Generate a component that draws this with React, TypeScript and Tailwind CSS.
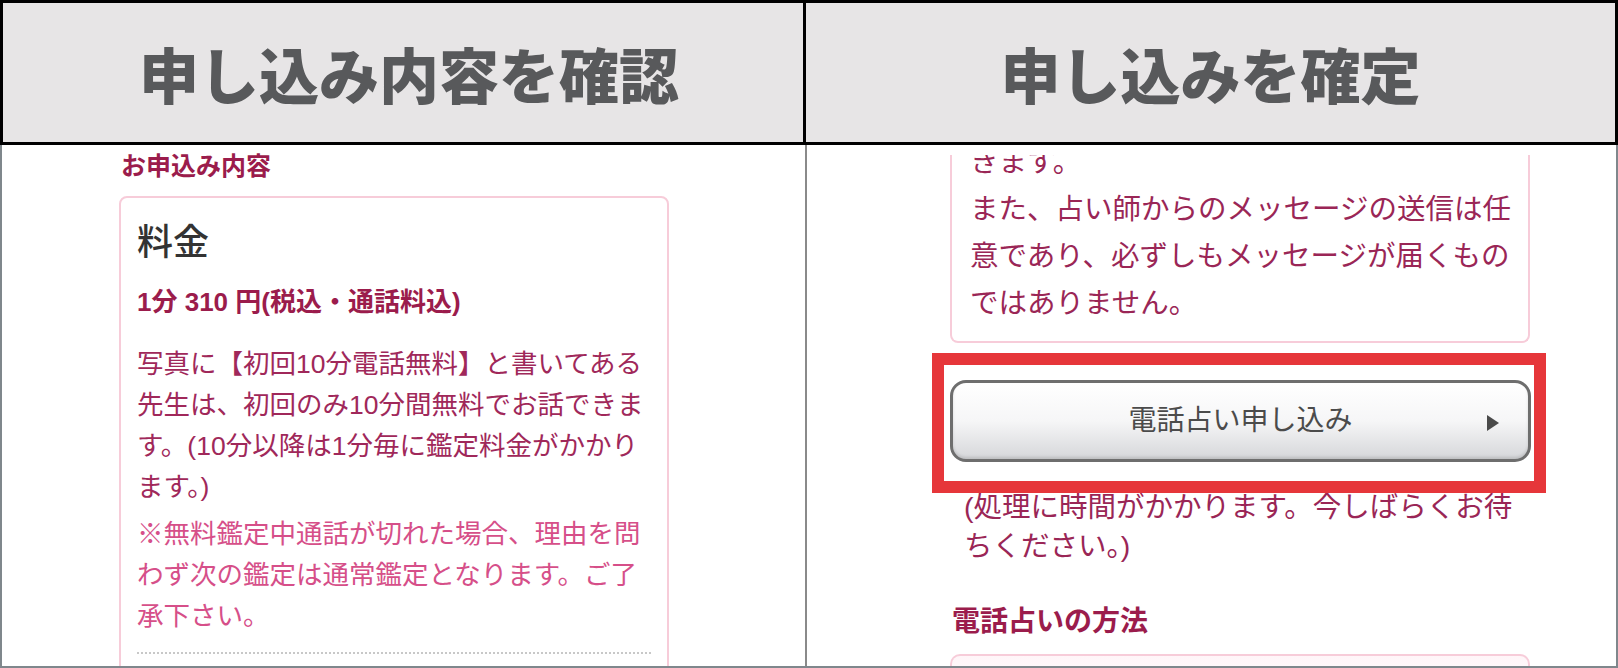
const jp = { fontFamily: '"Liberation Sans", "Noto Sans CJK JP", sans-serif' };
const jpHead = { fontFamily: '"Noto Sans CJK JP", sans-serif' };

function HeaderCell({ label, className }: { label: string; className?: string }) {
  return (
    <div className={`flex items-center justify-center bg-[#e7e5e6] ${className ?? ''}`}>
      <span className="text-[60px] font-black leading-none text-[#58595b]" style={jpHead}>
        {label}
      </span>
    </div>
  );
}

function LeftColumn() {
  return (
    <div className="w-[805px] h-full overflow-hidden pl-[117px] pt-[6px] border-r-2 border-[#8a8a8a]" style={jp}>
      <h2 className="pl-[2px] text-[25px] font-bold leading-[30px] text-[#9b1c4c]">お申込み内容</h2>
      <div className="mt-[15px] w-[550px] rounded-[8px] border-2 border-[#f7ccd9] px-[16px] pt-[21px]">
        <h3 className="text-[36px] font-medium leading-[48px] text-[#333333]">料金</h3>
        <p className="mt-[17px] text-[26px] font-bold leading-[36px] text-[#9b1c4c]">1分 310 円(税込・通話料込)</p>
        <p className="mt-[24px] whitespace-nowrap text-[26.5px] leading-[41px] text-[#a0285a]">
          写真に【初回10分電話無料】と書いてある<br />
          先生は、初回のみ10分間無料でお話できま<br />
          す。(10分以降は1分毎に鑑定料金がかかり<br />
          ます。)
        </p>
        <p className="mt-[6px] whitespace-nowrap text-[26.5px] leading-[41px] text-[#d64f89]">
          ※無料鑑定中通話が切れた場合、理由を問<br />
          わず次の鑑定は通常鑑定となります。ご了<br />
          承下さい。
        </p>
        <div className="mt-[15px] border-t-2 border-dotted border-[#c8c8c8]" />
        <div className="h-[40px]" />
      </div>
    </div>
  );
}

function CallButton() {
  return (
    <div className="relative mt-[37px]">
      <button
        type="button"
        className="relative flex h-[82px] w-[581px] items-center justify-center rounded-[16px] border-[3px] border-[#6e6e6e] bg-gradient-to-b from-white via-[#f6f6f7] to-[#d6d7da] shadow-[inset_0_-2px_3px_rgba(0,0,0,0.12)]"
      >
        <span className="text-[28px] leading-none text-[#4b4b4b]" style={jp}>電話占い申し込み</span>
        <svg className="absolute right-[29px] top-[32px]" width="12" height="16" viewBox="0 0 12 16">
          <path d="M0 0 L12 8 L0 16 Z" fill="#4a4a4a" />
        </svg>
      </button>
      <div className="pointer-events-none absolute left-[-18px] top-[-27px] z-10 h-[140px] w-[614px] border-[12px] border-[#e6363a]" />
    </div>
  );
}

function RightColumn() {
  return (
    <div className="flex-1 h-full overflow-hidden pt-[10px]" style={jp}>
      <div className="ml-[143px] w-[580px]">
        <div className="overflow-hidden">
          <div className="-mt-[16px] rounded-b-[8px] border-2 border-t-0 border-[#f7ccd9] pl-[18px] pb-[14px]">
            <p className="whitespace-nowrap text-[28.5px] leading-[47px] text-[#9a2656]">
              きます。<br />
              また、占い師からのメッセージの送信は任<br />
              意であり、必ずしもメッセージが届くもの<br />
              ではありません。
            </p>
          </div>
        </div>
        <CallButton />
        <p className="mt-[26px] whitespace-nowrap pl-[14px] text-[28.5px] leading-[39px] text-[#9a2656]">
          (処理に時間がかかります。今しばらくお待<br />
          ちください。)
        </p>
        <h2 className="mt-[36px] pl-[2px] text-[28px] font-bold leading-[39px] text-[#9b1c4c]">電話占いの方法</h2>
        <div className="mt-[13px] h-[40px] rounded-t-[10px] border-2 border-b-0 border-[#f7ccd9] bg-gradient-to-b from-[#fff5f8] to-white" />
      </div>
    </div>
  );
}

export default function App() {
  return (
    <div className="flex h-[668px] w-[1618px] flex-col overflow-hidden bg-white">
      <div className="flex h-[145px] shrink-0 border-[3px] border-black">
        <HeaderCell label="申し込み内容を確認" className="w-[803px] border-r-[3px] border-black pl-[12px]" />
        <HeaderCell label="申し込みを確定" className="flex-1" />
      </div>
      <div className="flex min-h-0 flex-1 border-x-2 border-b-2 border-[#7f878c]">
        <LeftColumn />
        <RightColumn />
      </div>
    </div>
  );
}
